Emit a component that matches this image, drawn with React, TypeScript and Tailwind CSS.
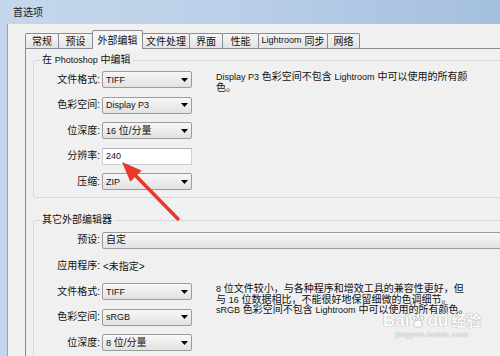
import React from "react";

const L = ({ children }: { children: React.ReactNode }) => (
  <span className="text-[9px]">{children}</span>
);

function Arrow() {
  return (
    <svg width="7" height="4" viewBox="0 0 7 4">
      <path d="M0 0h7L3.5 4z" fill="#000" />
    </svg>
  );
}

function Select({ children, wide }: { children: React.ReactNode; wide?: boolean }) {
  return (
    <div
      className={`${wide ? "w-[430px]" : "w-[90px]"} h-[17px] flex items-center justify-between rounded-[2px] border border-[#9c9c9c] bg-gradient-to-b from-[#f7f7f7] to-[#e2e2e2] pl-[3px] pr-[3px]`}
    >
      <span className="leading-none">{children}</span>
      {!wide && <Arrow />}
    </div>
  );
}

function Row({
  label,
  h,
  children,
}: {
  label: string;
  h: string;
  children: React.ReactNode;
}) {
  return (
    <div className={`flex items-center ${h}`}>
      <div className="w-[66px] text-right leading-none">{label}</div>
      <div className="ml-[2px]">{children}</div>
    </div>
  );
}

const tabs: { t: React.ReactNode; w: string; active?: boolean }[] = [
  { t: "常规", w: "w-[34px]" },
  { t: "预设", w: "w-[35px]" },
  { t: "外部编辑", w: "w-[51px]", active: true },
  { t: "文件处理", w: "w-[48px]" },
  { t: "界面", w: "w-[34px]" },
  { t: "性能", w: "w-[37px]" },
  {
    t: (
      <>
        <L>Lightroom</L>&nbsp;同步
      </>
    ),
    w: "w-[70px]",
  },
  { t: "网络", w: "w-[33px]" },
];

export default function App() {
  return (
    <div
      className="relative w-[500px] h-[356px] overflow-hidden bg-[#c4d6ec] text-[10px] text-[#111]"
      style={{ fontFamily: "'Liberation Sans', 'Noto Sans CJK SC', sans-serif" }}
    >
      {/* title bar */}
      <div className="h-[24px] flex items-center pl-[13px] bg-gradient-to-r from-[#c6d7ec] via-[#b9cee8] to-[#a4bfde]">
        <span className="text-[10px] text-[#1b1b1b]">首选项</span>
      </div>
      <div className="flex h-[332px]">
        <div className="w-[8px] shrink-0 bg-[#c4d6ec] border-r border-[#8ea3bd]" />
        <div className="flex-1 min-w-0 bg-[#f0f0f0] flex flex-col">
          {/* tabs */}
          <div className="mt-[6px] pl-[17px] flex items-end h-[18px]">
            {tabs.map((tab, i) =>
              tab.active ? (
                <div
                  key={i}
                  className={`${tab.w} shrink-0 h-[19px] -mb-px relative z-10 -ml-px border border-b-0 border-[#898c95] bg-[#f5f5f5] flex items-center justify-center rounded-t-[2px]`}
                >
                  {tab.t}
                </div>
              ) : (
                <div
                  key={i}
                  className={`${tab.w} shrink-0 h-[15px] ${i === 0 ? "" : "-ml-px"} border border-b-0 border-[#898c95] bg-gradient-to-b from-[#f5f5f5] to-[#e3e3e3] flex items-center justify-center rounded-t-[2px]`}
                >
                  {tab.t}
                </div>
              )
            )}
          </div>
          {/* panel */}
          <div className="ml-[17px] flex-1 border-t border-l border-[#898c95] bg-[#f0f0f0] pt-[4px] pl-[7px]">
            <fieldset className="w-[480px] border border-[#d8d8d8] rounded-[3px] pb-[2.5px]">
              <legend className="ml-[6px] px-[2px] leading-[14px]">
                在 <L>Photoshop</L> 中编辑
              </legend>
              <div className="flex">
                <div className="flex flex-col shrink-0">
                  <Row label="文件格式:" h="h-[25.5px]">
                    <Select>
                      <L>TIFF</L>
                    </Select>
                  </Row>
                  <Row label="色彩空间:" h="h-[25.5px]">
                    <Select>
                      <L>Display P3</L>
                    </Select>
                  </Row>
                  <Row label="位深度:" h="h-[25.5px]">
                    <Select>
                      <L>16</L> 位/分量
                    </Select>
                  </Row>
                  <Row label="分辨率:" h="h-[25.5px]">
                    <div className="w-[90px] h-[17px] flex items-center bg-white border border-[#c9d3de] border-t-[#a9b4c2] pl-[3px]">
                      <L>240</L>
                    </div>
                  </Row>
                  <Row label="压缩:" h="h-[25.5px]">
                    <Select>
                      <L>ZIP</L>
                    </Select>
                  </Row>
                </div>
                <div className="ml-[24px] mt-[5px] leading-[10.5px] whitespace-nowrap">
                  <div>
                    <L>Display P3</L> 色彩空间不包含 <L>Lightroom</L> 中可以使用的所有颜
                  </div>
                  <div>色。</div>
                </div>
              </div>
            </fieldset>

            <fieldset className="mt-[15px] w-[480px] border border-[#d8d8d8] rounded-[3px] pb-[4px]">
              <legend className="ml-[6px] px-[2px] leading-[14px]">其它外部编辑器</legend>
              <Row label="预设:" h="h-[26px]">
                <Select wide>自定</Select>
              </Row>
              <Row label="应用程序:" h="h-[26px]">
                <span className="ml-[1px]">&lt;未指定&gt;</span>
              </Row>
              <div className="flex">
                <div className="flex flex-col shrink-0">
                  <Row label="文件格式:" h="h-[25.5px]">
                    <Select>
                      <L>TIFF</L>
                    </Select>
                  </Row>
                  <Row label="色彩空间:" h="h-[25.5px]">
                    <Select>
                      <L>sRGB</L>
                    </Select>
                  </Row>
                  <Row label="位深度:" h="h-[25.5px]">
                    <Select>
                      <L>8</L> 位/分量
                    </Select>
                  </Row>
                </div>
                <div className="ml-[24px] mt-[5px] leading-[10.5px] whitespace-nowrap">
                  <div>
                    <L>8</L> 位文件较小，与各种程序和增效工具的兼容性更好，但
                  </div>
                  <div>
                    与 <L>16</L> 位数据相比，不能很好地保留细微的色调细节。
                  </div>
                  <div>
                    <L>sRGB</L> 色彩空间不包含 <L>Lightroom</L> 中可以使用的所有颜色。
                  </div>
                </div>
              </div>
            </fieldset>
          </div>
        </div>
      </div>

      {/* red annotation arrow */}
      <svg className="absolute left-0 top-0 pointer-events-none" width="500" height="356">
        <line x1="178" y1="219" x2="134" y2="174" stroke="#e8392c" strokeWidth="3.5" strokeLinecap="round" />
        <polygon points="122,162 141.7,170.6 130.3,181.8" fill="#e8392c" />
      </svg>

      {/* watermark */}
      <div
        className="absolute left-[383px] top-[312px] flex flex-col items-center text-white opacity-90 pointer-events-none"
        style={{ textShadow: "0 0 1px #9a9a9a, 0 0 1px #9a9a9a" }}
      >
        <div className="flex items-center text-[17px] font-bold leading-[18px]">
          <span>Bai</span>
          <svg width="16" height="16" viewBox="0 0 16 16" className="mx-[1px]">
            <g fill="#fff" stroke="#a0a0a0" strokeWidth="0.6">
              <ellipse cx="4" cy="5" rx="1.8" ry="2.3" />
              <ellipse cx="8" cy="3" rx="1.8" ry="2.3" />
              <ellipse cx="12" cy="5" rx="1.8" ry="2.3" />
              <path d="M8 7c-3 0-5 4-4 6s3 1 4 1 3 1 4-1-1-6-4-6z" />
            </g>
          </svg>
          <span>du</span>
          <span className="ml-[3px] text-[15px]">经验</span>
        </div>
        <div className="text-[8px] leading-[10px] tracking-[0.5px]">jingyan.baidu.com</div>
      </div>
    </div>
  );
}
